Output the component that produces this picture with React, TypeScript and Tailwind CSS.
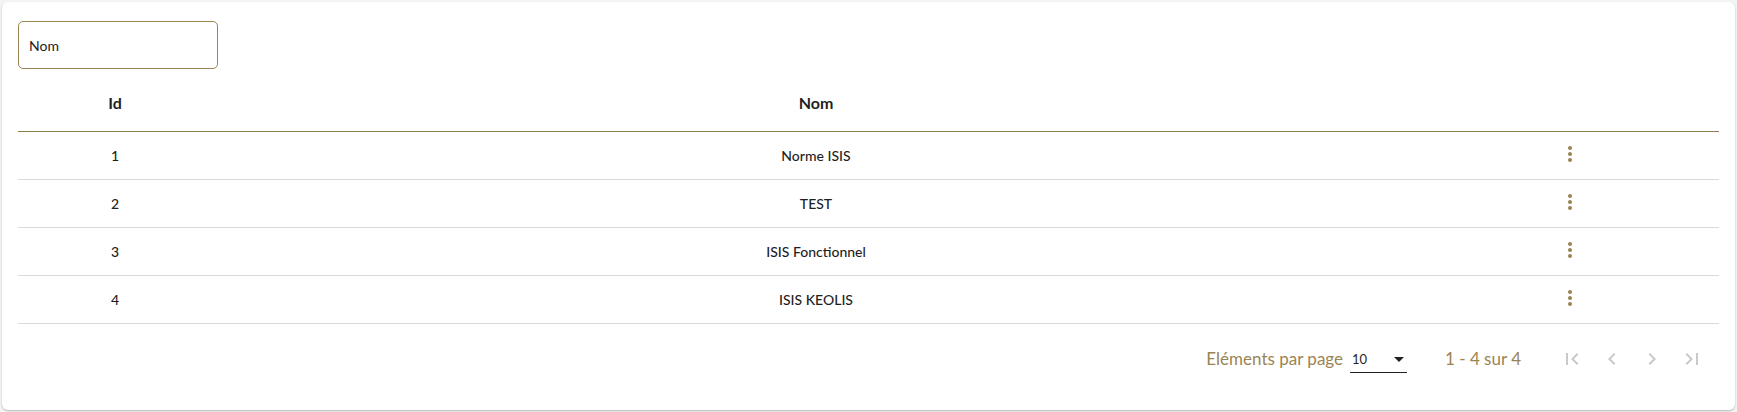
import React from "react";

const rows = [
  { id: 1, nom: "Norme ISIS" },
  { id: 2, nom: "TEST" },
  { id: 3, nom: "ISIS Fonctionnel" },
  { id: 4, nom: "ISIS KEOLIS" },
];

function MoreVert() {
  return (
    <svg viewBox="0 0 24 24" className="w-6 h-6 fill-[#9b8454]">
      <path d="M12 8c1.1 0 2-.9 2-2s-.9-2-2-2-2 .9-2 2 .9 2 2 2zm0 2c-1.1 0-2 .9-2 2s.9 2 2 2 2-.9 2-2-.9-2-2-2zm0 6c-1.1 0-2 .9-2 2s.9 2 2 2 2-.9 2-2-.9-2-2-2z" />
    </svg>
  );
}

const pagerIcons = [
  "M18.41 16.59L13.82 12l4.59-4.59L17 6l-6 6 6 6zM6 6h2v12H6z",
  "M15.41 7.41L14 6l-6 6 6 6 1.41-1.41L10.83 12z",
  "M10 6L8.59 7.41 13.17 12l-4.58 4.59L10 18l6-6z",
  "M5.59 7.41L10.18 12l-4.59 4.59L7 18l6-6-6-6zM16 6h2v12h-2z",
];

export default function App() {
  return (
    <div className="w-[1737px] h-[412px] bg-[#f4f4f4] p-[2px] font-['Lato','Liberation_Sans',sans-serif]">
      <div className="h-full bg-white rounded-md shadow-[0_1px_2px_rgba(0,0,0,0.25)] pl-[16px] pr-[16px] pt-[19px]">
        <div className="w-[200px] h-[48px] border border-[#9b8553] rounded-[5px] flex items-center px-[10px] text-[14px] text-[#222]">
          Nom
        </div>

        <div className="mt-[6px]">
          <div className="grid grid-cols-[194px_1fr_299px] h-[57px] items-center border-b border-[#8f7d4f] text-[16px] font-bold text-[#1f1f1f]">
            <div className="text-center">Id</div>
            <div className="text-center">Nom</div>
            <div />
          </div>
          {rows.map((r) => (
            <div
              key={r.id}
              className="grid grid-cols-[194px_1fr_299px] h-[48px] items-center border-b border-[#dadada] text-[14px] font-medium text-[#1f1f1f]"
            >
              <div className="text-center">{r.id}</div>
              <div className="text-center">{r.nom}</div>
              <div className="flex justify-center pb-[4px]">
                <MoreVert />
              </div>
            </div>
          ))}
        </div>

        <div className="mt-[7px] h-[56px] flex items-center justify-end pr-[7px] text-[17px] text-[#9b8454]">
          <span>Eléments par page</span>
          <div className="ml-[7px] w-[57px] h-[28px] border-b border-[#222] flex items-center justify-between pt-[2px] text-[13px] text-[#1f1f1f]">
            <span className="pl-[2px]">10</span>
            <span className="w-0 h-0 border-l-[5px] border-r-[5px] border-t-[5px] border-l-transparent border-r-transparent border-t-[#222] mr-[3px]" />
          </div>
          <span className="ml-[38px]">1 - 4 sur 4</span>
          <div className="ml-[31px] flex">
            {pagerIcons.map((d, i) => (
              <div key={i} className="w-[40px] h-[40px] flex items-center justify-center">
                <svg viewBox="0 0 24 24" className="w-6 h-6 fill-[#c9c9c9]">
                  <path d={d} />
                </svg>
              </div>
            ))}
          </div>
        </div>
      </div>
    </div>
  );
}
